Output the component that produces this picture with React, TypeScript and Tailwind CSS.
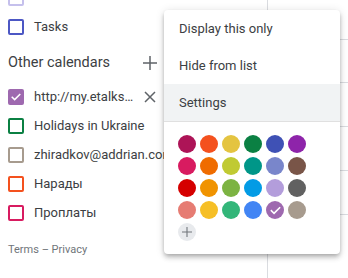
import React from "react";

const swatches = [
  ["#AD1457", "#F4511E", "#E4C441", "#0B8043", "#3F51B5", "#8E24AA"],
  ["#D81B60", "#EF6C00", "#C0CA33", "#009688", "#7986CB", "#795548"],
  ["#D50000", "#F09300", "#7CB342", "#039BE5", "#B39DDB", "#616161"],
  ["#E67C73", "#F6BF26", "#33B679", "#4285F4", "#9E69AF", "#A79B8E"],
];

const calendars = [
  { name: "Holidays in Ukraine", color: "#0B8043" },
  { name: "zhiradkov@addrian.com", color: "#A79B8E" },
  { name: "Нарады", color: "#F4511E" },
  { name: "Проплаты", color: "#D81B60" },
];

function Check({ color = "white", size = 12 }: { color?: string; size?: number }) {
  return (
    <svg width={size} height={size} viewBox="0 0 24 24" fill="none">
      <path d="M4.5 12.5l4.8 4.8L19.5 7" stroke={color} strokeWidth="3" strokeLinecap="square" />
    </svg>
  );
}

function Box({ color, checked }: { color: string; checked?: boolean }) {
  return (
    <div
      className="w-4 h-4 rounded-[2px] border-2 flex items-center justify-center shrink-0"
      style={{ borderColor: color, backgroundColor: checked ? color : "transparent" }}
    >
      {checked && <Check />}
    </div>
  );
}

function Plus({ size = 14, color = "#5f6368" }: { size?: number; color?: string }) {
  return (
    <svg width={size} height={size} viewBox="0 0 14 14" fill="none">
      <path d="M7 0v14M0 7h14" stroke={color} strokeWidth="1.5" />
    </svg>
  );
}

export default function App() {
  return (
    <div className="relative w-[348px] h-[278px] overflow-hidden bg-white font-['Roboto',sans-serif] text-[#3c4043]">
      <div className="flex h-full">
        {/* Sidebar */}
        <div className="w-[165px] shrink-0 flex flex-col -mt-[17px]">
          <div className="h-[29px] flex items-center gap-[10px] pl-2">
            <Box color="#c5c0ec" />
          </div>
          <div className="h-[29px] flex items-center gap-[10px] pl-2 text-[13px]">
            <Box color="#4c57c4" />
            <span>Tasks</span>
          </div>
          <div className="h-[41px] pt-[3px] flex items-center justify-between pl-2 pr-[8px] text-[14.5px]">
            <span>Other calendars</span>
            <Plus />
          </div>
          <div className="h-[29px] flex items-center gap-[10px] pl-2 pr-[9px] text-[13px] whitespace-nowrap">
            <Box color="#9E69AF" checked />
            <span>http://my.etalks…</span>
            <svg className="ml-auto" width="12" height="12" viewBox="0 0 12 12" fill="none">
              <path d="M1 1l10 10M11 1L1 11" stroke="#5f6368" strokeWidth="1.5" />
            </svg>
          </div>
          {calendars.map((c) => (
            <div key={c.name} className="h-[29px] flex items-center gap-[10px] pl-2 text-[13px] whitespace-nowrap">
              <Box color={c.color} />
              <span>{c.name}</span>
            </div>
          ))}
          <div className="h-[47px] flex items-center pl-2 text-[11px] text-[#70757a]">
            Terms – Privacy
          </div>
        </div>

        {/* Calendar grid behind the menu */}
        <div className="flex-1 flex">
          {[0, 1].map((col) => (
            <div key={col} className={col === 0 ? "w-[103px] border-r border-[#dadce0] flex flex-col" : "flex-1 flex flex-col"}>
              <div className="h-[40px] border-b border-[#dadce0]" />
              <div className="h-[43px] border-b border-[#dadce0]" />
              <div className="h-[44px] border-b border-[#dadce0]" />
              <div className="h-[44px] border-b border-[#dadce0]" />
              <div className="h-[44px] border-b border-[#dadce0]" />
            </div>
          ))}
        </div>
      </div>

      {/* Calendar options menu */}
      <div className="absolute left-[164px] top-[10px] w-[176px] bg-white rounded-[4px] shadow-[0_4px_5px_0_rgba(0,0,0,0.14),0_1px_10px_0_rgba(0,0,0,0.12),0_2px_4px_-1px_rgba(0,0,0,0.2)] text-[13px] text-[#3c4043]">
        <div className="h-[37px] flex items-center pl-[15px]">Display this only</div>
        <div className="h-[37px] flex items-center pl-[15px]">Hide from list</div>
        <div className="h-[37px] flex items-center pl-[15px] bg-[#f1f3f4]">Settings</div>
        <div className="border-t border-[#e0e0e0] pt-[13px] pb-[13px] pl-[14px] flex flex-col gap-[4px]">
          {swatches.map((row, i) => (
            <div key={i} className="flex gap-[4px]">
              {row.map((c) => (
                <div key={c} className="w-[18px] h-[18px] rounded-full flex items-center justify-center" style={{ backgroundColor: c }}>
                  {c === "#9E69AF" && <Check size={13} />}
                </div>
              ))}
            </div>
          ))}
          <div className="w-[18px] h-[18px] rounded-full bg-[#e8eaed] flex items-center justify-center">
            <Plus size={10} color="#70757a" />
          </div>
        </div>
      </div>
    </div>
  );
}
